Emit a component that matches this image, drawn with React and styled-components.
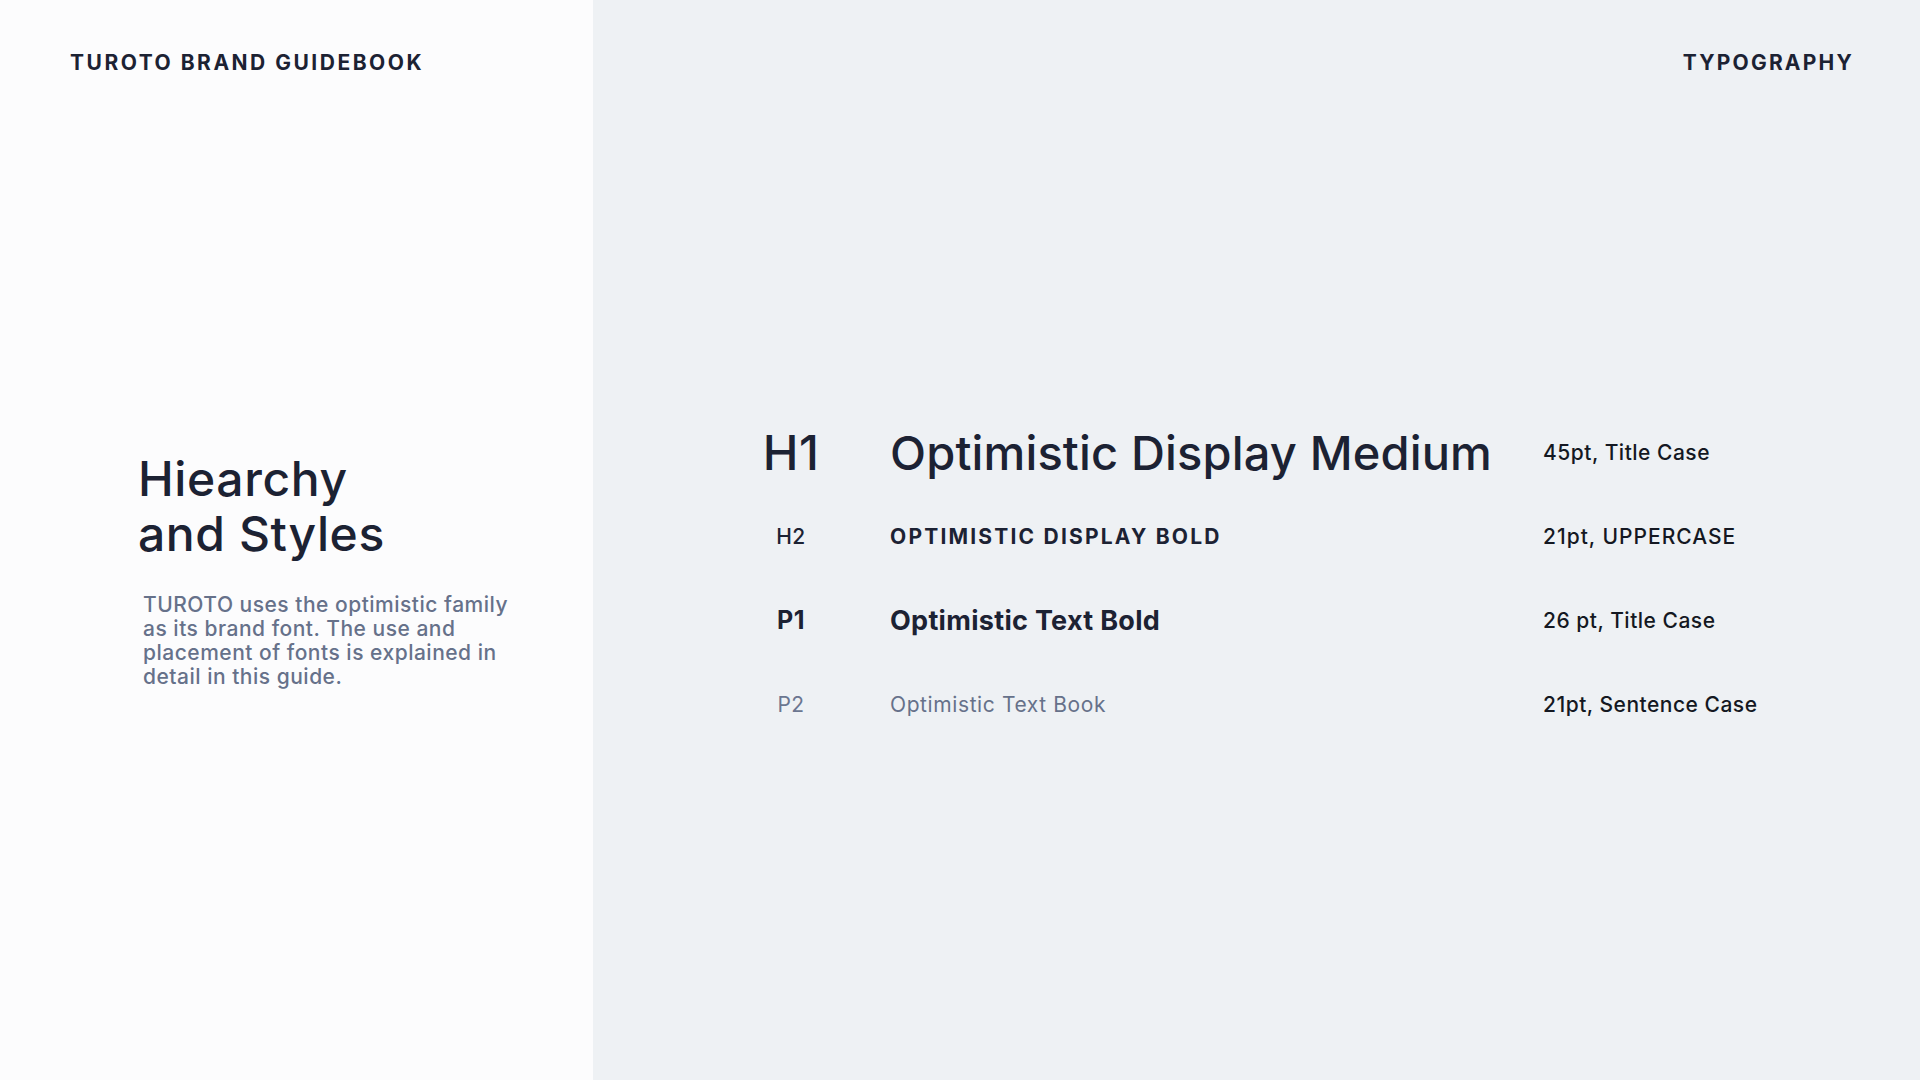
import React from "react";
import styled, { createGlobalStyle } from "styled-components";

const GlobalStyle = createGlobalStyle`
  html, body {
    margin: 0;
    padding: 0;
  }
  body {
    font-family: Inter, "Noto Sans", "Liberation Sans", sans-serif;
    color: #1c2233;
  }
`;

const Page = styled.div`
  display: flex;
  width: 1920px;
  height: 1080px;
  overflow: hidden;
`;

const SidePanel = styled.aside`
  width: 593px;
  flex-shrink: 0;
  background-color: #fcfcfd;
  padding: 51px 0 0 70px;
  box-sizing: border-box;
  display: flex;
  flex-direction: column;
`;

const MainPanel = styled.main`
  flex: 1;
  background-color: #eef1f4;
  padding: 51px 66px 0 145px;
  box-sizing: border-box;
  display: flex;
  flex-direction: column;
`;

const Eyebrow = styled.div`
  font-size: 21px;
  line-height: 24px;
  font-weight: 700;
  letter-spacing: ${(props) => props.$spacing || "2.5px"};
  text-transform: uppercase;
  color: #1c2233;
  text-align: ${(props) => props.$align || "left"};
`;

const Intro = styled.section`
  margin-top: 376px;
  padding-left: 68px;
`;

const Title = styled.h1`
  margin: 0;
  font-size: 48px;
  line-height: 55px;
  font-weight: 500;
  letter-spacing: 0.6px;
  color: #1c2233;
`;

const Lead = styled.p`
  margin: 32px 0 0 5px;
  width: 390px;
  font-size: 21px;
  line-height: 24px;
  font-weight: 500;
  letter-spacing: 0.5px;
  color: #66718a;
`;

const StyleTable = styled.div`
  margin-top: 335px;
  display: grid;
  grid-template-columns: 106px 607px 1fr;
  column-gap: 46px;
  grid-auto-rows: 84px;
  align-items: center;
`;

const Tag = styled.div`
  text-align: center;
  font-size: ${(props) => props.$size};
  font-weight: ${(props) => props.$weight};
  letter-spacing: 0.4px;
  color: ${(props) => props.$color};
`;

const Sample = styled.div`
  font-size: ${(props) => props.$size};
  font-weight: ${(props) => props.$weight};
  letter-spacing: ${(props) => props.$spacing || "0"};
  color: ${(props) => props.$color};
  white-space: nowrap;
`;

const Spec = styled.div`
  font-size: 21px;
  font-weight: 500;
  letter-spacing: ${(props) => props.$spacing || "0.5px"};
  color: #141822;
  white-space: nowrap;
`;

const rows = [
  {
    tag: "H1",
    tagSize: "48px",
    tagWeight: 500,
    sample: "Optimistic Display Medium",
    size: "47px",
    weight: 500,
    spacing: "0.15px",
    color: "#1c2233",
    spec: "45pt, Title Case",
  },
  {
    tag: "H2",
    tagSize: "21px",
    tagWeight: 500,
    sample: "OPTIMISTIC DISPLAY BOLD",
    size: "21px",
    weight: 700,
    spacing: "2.2px",
    color: "#1c2233",
    spec: "21pt, UPPERCASE",
    specSpacing: "1px",
  },
  {
    tag: "P1",
    tagSize: "25px",
    tagWeight: 700,
    sample: "Optimistic Text Bold",
    size: "27px",
    weight: 700,
    spacing: "0.3px",
    color: "#1c2233",
    spec: "26 pt, Title Case",
  },
  {
    tag: "P2",
    tagSize: "21px",
    tagWeight: 400,
    tagColor: "#6b7690",
    sample: "Optimistic Text Book",
    size: "21px",
    weight: 400,
    spacing: "0.6px",
    color: "#66718a",
    spec: "21pt, Sentence Case",
  },
];

const App = () => {
  return (
    <>
      <GlobalStyle />
      <Page>
        <SidePanel>
          <Eyebrow>Turoto Brand Guidebook</Eyebrow>
          <Intro>
            <Title>
              Hiearchy
              <br />
              and Styles
            </Title>
            <Lead>
              TUROTO uses the optimistic family as its brand font. The use and
              placement of fonts is explained in detail in this guide.
            </Lead>
          </Intro>
        </SidePanel>
        <MainPanel>
          <Eyebrow $align="right" $spacing="2.2px">
            Typography
          </Eyebrow>
          <StyleTable>
            {rows.map((row) => (
              <React.Fragment key={row.tag}>
                <Tag
                  $size={row.tagSize}
                  $weight={row.tagWeight}
                  $color={row.tagColor || "#1c2233"}
                >
                  {row.tag}
                </Tag>
                <Sample
                  $size={row.size}
                  $weight={row.weight}
                  $spacing={row.spacing}
                  $color={row.color}
                >
                  {row.sample}
                </Sample>
                <Spec $spacing={row.specSpacing}>{row.spec}</Spec>
              </React.Fragment>
            ))}
          </StyleTable>
        </MainPanel>
      </Page>
    </>
  );
};

export default App;
